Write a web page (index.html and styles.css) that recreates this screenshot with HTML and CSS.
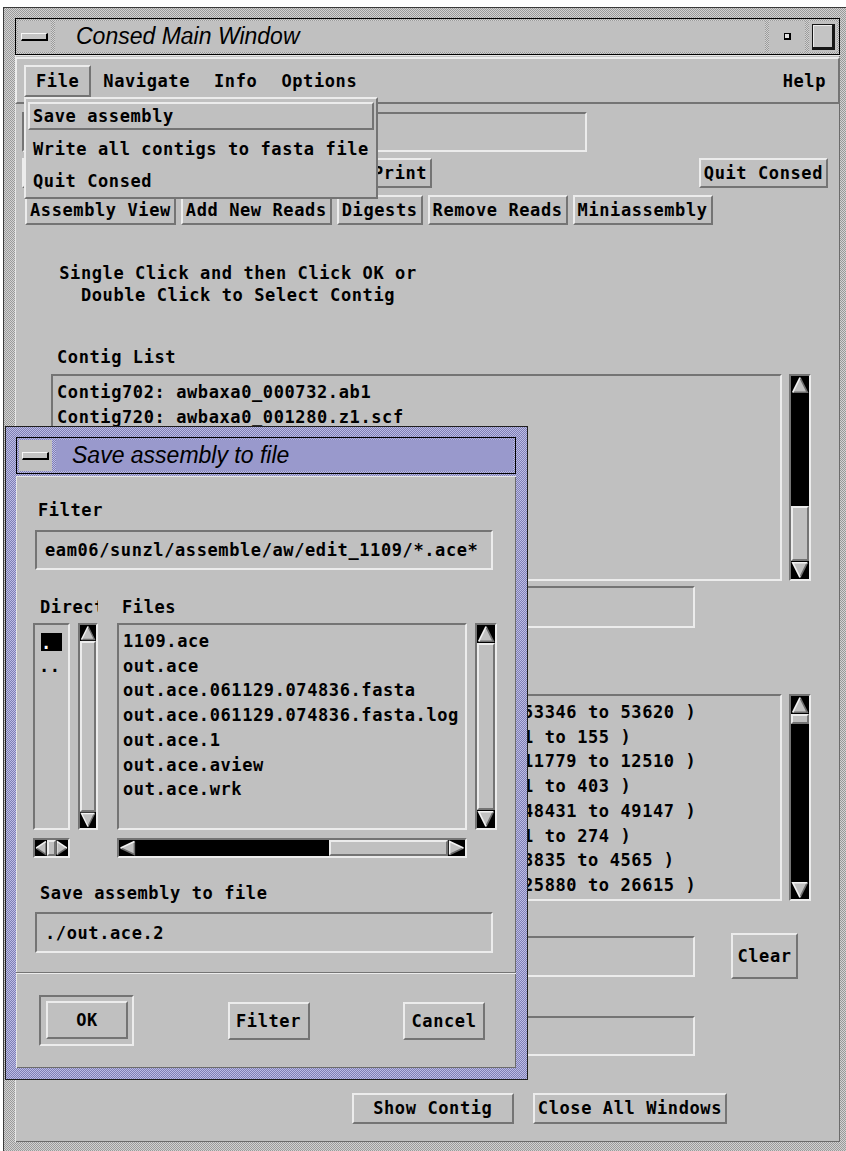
FILE: index.html
```html
<!DOCTYPE html>
<html>
<head>
<meta charset="utf-8">
<title>Consed</title>
<link rel="stylesheet" href="styles.css">
</head>
<body>
<svg class="defs" aria-hidden="true">
  <symbol id="arr-up" viewBox="0 0 16 16" preserveAspectRatio="none">
    <rect width="16" height="16" fill="#000"/>
    <polygon points="8,1.5 14.5,14.5 1.5,14.5" fill="#c0c0c0"/>
    <path d="M8,1.5 L14.5,14.5 L1.5,14.5" fill="none" stroke="#6e6e6e" stroke-width="1.4"/>
    <path d="M1.5,14.5 L8,1.5" fill="none" stroke="#f2f2f2" stroke-width="1.4"/>
  </symbol>
  <symbol id="arr-down" viewBox="0 0 16 16" preserveAspectRatio="none">
    <rect width="16" height="16" fill="#000"/>
    <polygon points="1.5,1.5 14.5,1.5 8,14.5" fill="#c0c0c0"/>
    <path d="M14.5,1.5 L8,14.5" fill="none" stroke="#6e6e6e" stroke-width="1.4"/>
    <path d="M8,14.5 L1.5,1.5 L14.5,1.5" fill="none" stroke="#f2f2f2" stroke-width="1.4"/>
  </symbol>
  <symbol id="arr-left" viewBox="0 0 16 16" preserveAspectRatio="none">
    <rect width="16" height="16" fill="#000"/>
    <polygon points="1.5,8 14.5,1.5 14.5,14.5" fill="#c0c0c0"/>
    <path d="M14.5,1.5 L14.5,14.5 L1.5,8" fill="none" stroke="#6e6e6e" stroke-width="1.4"/>
    <path d="M1.5,8 L14.5,1.5" fill="none" stroke="#f2f2f2" stroke-width="1.4"/>
  </symbol>
  <symbol id="arr-right" viewBox="0 0 16 16" preserveAspectRatio="none">
    <rect width="16" height="16" fill="#000"/>
    <polygon points="1.5,1.5 14.5,8 1.5,14.5" fill="#c0c0c0"/>
    <path d="M14.5,8 L1.5,14.5" fill="none" stroke="#6e6e6e" stroke-width="1.4"/>
    <path d="M1.5,14.5 L1.5,1.5 L14.5,8" fill="none" stroke="#f2f2f2" stroke-width="1.4"/>
  </symbol>
</svg>

<div class="desktop">

  <!-- Consed main window -->
  <div class="wm-frame main-frame">
    <div class="titlebar">
      <div class="tb-cell tb-menu"><span class="menu-glyph"></span></div>
      <div class="tb-cell tb-title">Consed Main Window</div>
      <div class="tb-cell tb-min"><span class="min-glyph"></span></div>
      <div class="tb-cell tb-max"><span class="max-glyph"></span></div>
    </div>

    <div class="client main-client">
      <div class="menubar raised">
        <span class="cascade raised">File</span>
        <span class="cascade">Navigate</span>
        <span class="cascade">Info</span>
        <span class="cascade">Options</span>
        <span class="cascade help">Help</span>
      </div>

      <div class="field sunken top-field"></div>

      <div class="btn-row row-one">
        <span class="btn raised find-btn"></span>
        <span class="btn raised">Print</span>
        <span class="btn raised push-right">Quit Consed</span>
      </div>

      <div class="btn-row row-two">
        <span class="btn raised">Assembly View</span>
        <span class="btn raised">Add New Reads</span>
        <span class="btn raised">Digests</span>
        <span class="btn raised">Remove Reads</span>
        <span class="btn raised">Miniassembly</span>
      </div>

      <div class="hint">Single Click and then Click OK or<br>Double Click to Select Contig</div>

      <div class="label contig-label">Contig List</div>
      <div class="list-row">
        <ul class="list sunken main-list">
          <li>Contig702: awbaxa0_000732.ab1</li>
          <li>Contig720: awbaxa0_001280.z1.scf</li>
        </ul>
        <div class="vscroll sunken">
          <svg class="arrow"><use href="#arr-up"/></svg>
          <div class="trough end"><div class="slider raised" style="height:55px"></div></div>
          <svg class="arrow"><use href="#arr-down"/></svg>
        </div>
      </div>

      <div class="field-row">
        <div class="field sunken"></div>
      </div>

      <div class="list-row reads-row">
        <ul class="list sunken main-list reads-list">
          <li>53346 to 53620 )</li>
          <li>1 to 155 )</li>
          <li>11779 to 12510 )</li>
          <li>1 to 403 )</li>
          <li>48431 to 49147 )</li>
          <li>1 to 274 )</li>
          <li>3835 to 4565 )</li>
          <li>25880 to 26615 )</li>
        </ul>
        <div class="vscroll sunken">
          <svg class="arrow"><use href="#arr-up"/></svg>
          <div class="trough"><div class="slider raised" style="height:10px"></div></div>
          <svg class="arrow"><use href="#arr-down"/></svg>
        </div>
      </div>

      <div class="field-row clear-row">
        <div class="field sunken"></div>
        <span class="btn raised clear-btn">Clear</span>
      </div>

      <div class="field-row last-field">
        <div class="field sunken"></div>
      </div>

      <div class="btn-row bottom-row">
        <span class="btn raised show-btn">Show Contig</span>
        <span class="btn raised">Close All Windows</span>
      </div>
    </div>
  </div>

  <!-- File menu pulled down -->
  <div class="dropdown raised">
    <div class="menu-item armed">Save assembly</div>
    <div class="menu-item">Write all contigs to fasta file</div>
    <div class="menu-item">Quit Consed</div>
  </div>

  <!-- File selection dialog -->
  <div class="wm-frame dialog-frame">
    <div class="titlebar">
      <div class="tb-cell tb-menu"><span class="menu-glyph"></span></div>
      <div class="tb-cell tb-title">Save assembly to file</div>
    </div>

    <div class="client dialog-client">
      <div class="label filter-label">Filter</div>
      <div class="field sunken dlg-field">eam06/sunzl/assemble/aw/edit_1109/*.ace*</div>

      <div class="dlg-heads">
        <span class="label dir-label">Direct</span>
        <span class="label files-label">Files</span>
      </div>

      <div class="dlg-lists">
        <ul class="list sunken dir-list">
          <li><span class="sel">.</span></li>
          <li>..</li>
        </ul>
        <div class="vscroll sunken dir-vscroll">
          <svg class="arrow"><use href="#arr-up"/></svg>
          <div class="trough"><div class="slider raised full"></div></div>
          <svg class="arrow"><use href="#arr-down"/></svg>
        </div>
        <ul class="list sunken files-list">
          <li>1109.ace</li>
          <li>out.ace</li>
          <li>out.ace.061129.074836.fasta</li>
          <li>out.ace.061129.074836.fasta.log</li>
          <li>out.ace.1</li>
          <li>out.ace.aview</li>
          <li>out.ace.wrk</li>
        </ul>
        <div class="vscroll sunken files-vscroll">
          <svg class="arrow"><use href="#arr-up"/></svg>
          <div class="trough"><div class="slider raised full"></div></div>
          <svg class="arrow"><use href="#arr-down"/></svg>
        </div>
      </div>

      <div class="dlg-hscrolls">
        <div class="hscroll sunken dir-hscroll">
          <svg class="arrow"><use href="#arr-left"/></svg>
          <div class="trough"><div class="slider raised full"></div></div>
          <svg class="arrow"><use href="#arr-right"/></svg>
        </div>
        <div class="hscroll sunken files-hscroll">
          <svg class="arrow"><use href="#arr-left"/></svg>
          <div class="trough end"><div class="slider raised" style="width:119px"></div></div>
          <svg class="arrow"><use href="#arr-right"/></svg>
        </div>
      </div>

      <div class="label save-label">Save assembly to file</div>
      <div class="field sunken dlg-field save-field">./out.ace.2</div>

      <div class="separator"></div>

      <div class="dlg-buttons">
        <div class="default-ring sunken"><span class="btn raised dlg-btn">OK</span></div>
        <span class="btn raised dlg-btn">Filter</span>
        <span class="btn raised dlg-btn">Cancel</span>
      </div>
    </div>
  </div>

</div>
</body>
</html>
```

FILE: styles.css
```css
* { box-sizing: border-box; }

html, body { margin: 0; padding: 0; }

body {
  width: 846px;
  height: 1151px;
  overflow: hidden;
  background: #ffffff;
  font-family: "DejaVu Sans Mono", "Liberation Mono", monospace;
  font-weight: bold;
  font-size: 17px;
  letter-spacing: 0.6px;
  color: #000;
}

ul { list-style: none; margin: 0; }

.defs { position: absolute; width: 0; height: 0; overflow: hidden; }

.desktop {
  position: relative;
  width: 846px;
  height: 1151px;
  overflow: hidden;
  background: #ffffff;
}

/* Motif bevels */
.raised { border: 2px solid; border-color: #ececec #747474 #747474 #ececec; }
.sunken { border: 2px solid; border-color: #747474 #ececec #ececec #747474; }

/* Window manager frames */
.wm-frame {
  position: absolute;
  display: flex;
  flex-direction: column;
  border: 1px solid #3a3a3a;
  background-color: #b6b6b6;
  background-image: repeating-conic-gradient(#d2d2d2 0 25%, #9a9a9a 0 50%);
  background-size: 2px 2px;
}

.main-frame {
  left: 3px;
  top: 7px;
  width: 849px;
  height: 1150px;
  padding: 10px 11px 0 11px;
}

.dialog-frame {
  left: 5px;
  top: 426px;
  width: 523px;
  height: 654px;
  padding: 10px 11px 11px 10px;
  border-color: #1e1e1e;
  background-color: #9d9dcc;
  background-image: repeating-conic-gradient(#bcbce6 0 25%, #8080b4 0 50%);
}

.titlebar {
  flex: none;
  display: flex;
  gap: 4px;
  height: 37px;
  padding: 2px;
  border: 1px solid #000;
}

.tb-cell {
  display: flex;
  align-items: center;
  justify-content: center;
  background: #c0c0c0;
}

.tb-menu { width: 33px; }
.tb-min { width: 36px; }
.tb-max { width: 28px; }

.tb-title {
  flex: 1;
  justify-content: flex-start;
  padding-left: 21px;
  font-family: "Liberation Sans", Arial, sans-serif;
  font-style: italic;
  font-weight: normal;
  font-size: 23px;
  letter-spacing: 0;
  white-space: nowrap;
  overflow: hidden;
}

.dialog-frame .tb-title {
  background: #9999cc;
  padding-left: 16px;
}

.menu-glyph {
  width: 27px;
  height: 8px;
  background: #c4c4c4;
  border: solid;
  border-width: 1px 2px 2px 1px;
  border-color: #f6f6f6 #000 #000 #f6f6f6;
}

.min-glyph {
  width: 7px;
  height: 7px;
  background: #e0e0e0;
  border: solid #000;
  border-width: 1px 2px 2px 1px;
}

.max-glyph {
  width: 23px;
  height: 26px;
  background: #c4c4c4;
  border: solid #161616;
  border-width: 1px 3px 3px 1px;
  box-shadow: inset 1px 1px 0 #ececec;
}

/* Client areas */
.client {
  background: #c0c0c0;
  display: flex;
  flex-direction: column;
  box-shadow: inset 1px 1px 0 #e6e6e6, inset -1px -1px 0 #6c6c6c;
}

.main-client {
  flex: none;
  height: 1087px;
}

.dialog-client {
  flex: 1;
  margin-top: 2px;
  padding: 0 18px 0 17px;
}

/* Menu bar */
.menubar {
  display: flex;
  height: 47px;
  margin-top: 2px;
  padding: 6px 0 5px 7px;
}

.cascade {
  height: 32px;
  padding: 0 10px;
  border: 2px solid transparent;
  line-height: 28px;
  white-space: nowrap;
}

.cascade.raised { border-color: #ececec #747474 #747474 #ececec; }
.cascade.help { margin-left: auto; }

/* Generic widgets */
.field {
  background: #c0c0c0;
  padding: 0 8px;
  white-space: nowrap;
  overflow: hidden;
  display: flex;
  align-items: center;
}

.btn {
  display: block;
  height: 30px;
  padding: 0 3px;
  line-height: 26px;
  white-space: nowrap;
  background: #c0c0c0;
  text-align: center;
}

.label {
  line-height: 22px;
  white-space: nowrap;
}

.top-field {
  width: 565px;
  height: 40px;
  margin: 8px 0 0 7px;
}

.btn-row {
  display: flex;
  align-items: center;
}

.row-one {
  height: 30px;
  margin-top: 6px;
  gap: 6px;
  padding: 0 12px 0 7px;
}

/* the buttons left of Print sit under the open menu */
.find-btn { width: 340px; }

.push-right { margin-left: auto; }

.row-two {
  height: 30px;
  margin-top: 7px;
  gap: 5px;
  padding-left: 10px;
}

.hint {
  width: 360px;
  margin: 37px 0 0 43px;
  line-height: 22px;
  text-align: center;
}

.contig-label { margin: 40px 0 0 42px; }

.list-row {
  display: flex;
  gap: 7px;
  height: 207px;
  margin: 6px 0 0 36px;
}

.reads-row { margin-top: 66px; }

.list {
  background: #c0c0c0;
  padding: 4px;
  line-height: 24.7px;
  overflow: hidden;
}

.list li { white-space: pre; }

.main-list { width: 731px; }

/* position column of the read list */
.reads-list { padding-left: 470px; }

.field-row {
  display: flex;
  align-items: center;
  height: 42px;
  margin: 5px 145px 0 180px;
}

.field-row .field {
  flex: 1;
  align-self: stretch;
}

.clear-row {
  height: 46px;
  margin: 32px 42px 0 180px;
}

.clear-row .field {
  align-self: center;
  height: 41px;
}

.clear-btn {
  width: 67px;
  height: 46px;
  line-height: 42px;
  margin-left: 36px;
}

.last-field {
  height: 40px;
  margin-top: 37px;
}

.bottom-row {
  height: 31px;
  margin-top: 37px;
  gap: 19px;
  justify-content: flex-end;
  padding-right: 113px;
}

.bottom-row .btn {
  height: 31px;
  line-height: 27px;
}

.show-btn { width: 162px; }

/* Scrollbars */
.vscroll {
  width: 22px;
  flex: none;
  display: flex;
  flex-direction: column;
  background: #000;
}

.vscroll .arrow {
  display: block;
  flex: none;
  width: 100%;
  height: 18px;
}

.hscroll {
  height: 20px;
  display: flex;
  background: #000;
}

.hscroll .arrow {
  display: block;
  flex: none;
  width: 17px;
  height: 100%;
}

.trough {
  flex: 1;
  display: flex;
  flex-direction: column;
  background: #000;
}

.hscroll .trough { flex-direction: row; }
.trough.end { justify-content: flex-end; }

.slider {
  flex: none;
  background: #c0c0c0;
}

.slider.full { flex: 1; }

/* Pulled-down File menu */
.dropdown {
  position: absolute;
  left: 24px;
  top: 97px;
  width: 354px;
  display: flex;
  flex-direction: column;
  gap: 4.5px;
  padding: 3px 0 2px;
  background: #c0c0c0;
}

.menu-item {
  height: 28px;
  margin: 0 2px;
  padding: 0 3px;
  border: 2px solid transparent;
  line-height: 24px;
  white-space: nowrap;
}

.menu-item.armed { border-color: #ececec #747474 #747474 #ececec; }

/* File selection dialog */
.filter-label { margin: 23px 0 0 5px; }

.dlg-field {
  width: 458px;
  height: 40px;
  margin: 9px 0 0 2px;
}

.dlg-heads {
  display: flex;
  margin-top: 26px;
}

.dir-label {
  width: 58px;
  margin-left: 7px;
  overflow: hidden;
}

.files-label { margin-left: 24px; }

.dlg-lists {
  display: flex;
  height: 207px;
  margin-top: 5px;
}

.dir-list { width: 37px; flex: none; margin-right: 8px; }

.sel {
  display: inline-block;
  width: 21px;
  height: 18px;
  margin-left: 2px;
  line-height: 20px;
  background: #000;
  color: #fff;
  vertical-align: middle;
}

.dir-vscroll { width: 20px; margin-right: 19px; }
.dir-vscroll .arrow { height: 16px; }

.files-list { width: 350px; flex: none; margin-right: 8px; }

.dlg-hscrolls {
  display: flex;
  margin-top: 8px;
}

.dir-hscroll { width: 37px; margin-right: 47px; }
.dir-hscroll .arrow { width: 12px; }

.files-hscroll { width: 350px; }

.save-label { margin: 24px 0 0 7px; }

.save-field {
  height: 41px;
  margin-top: 8px;
}

.separator {
  height: 2px;
  margin: 19px -18px 0 -17px;
  border-top: 1px solid #747474;
  border-bottom: 1px solid #ececec;
}

.dlg-buttons {
  display: flex;
  align-items: center;
  justify-content: space-between;
  height: 51px;
  margin-top: 21px;
  padding: 0 13px 0 6px;
}

.default-ring {
  padding: 4px 4px 5px 5px;
}

.dlg-btn {
  width: 82px;
  height: 38px;
  line-height: 34px;
}
```
